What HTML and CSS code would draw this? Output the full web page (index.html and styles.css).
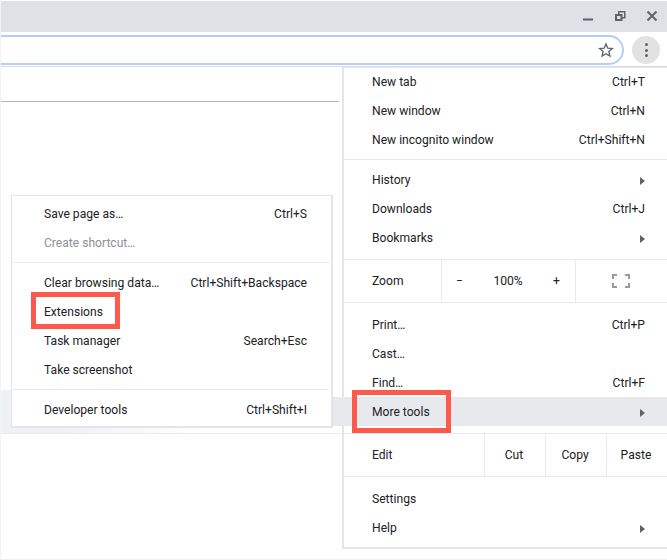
FILE: index.html
```html
<!DOCTYPE html>
<html lang="en">
<head>
<meta charset="utf-8">
<title>Chrome menu</title>
<link rel="stylesheet" href="styles.css">
</head>
<body>
<header class="titlebar">
  <svg class="win" width="16" height="16" viewBox="0 0 16 16"><rect x="3" y="10.500" width="10" height="2" fill="#5f6368"/></svg>
  <svg class="win" width="16" height="16" viewBox="0 0 16 16"><path d="M6 3h7.500v7.500h-3V9h1.500V4.500H7.500V6H6z M3 6h7.500v7H3z M5 8v3h3.500V8z" fill="#5f6368" fill-rule="evenodd"/></svg>
  <svg class="win" width="16" height="16" viewBox="0 0 16 16"><path d="M3.500 3.500l9 9M12.500 3.500l-9 9" stroke="#5f6368" stroke-width="2" fill="none"/></svg>
</header>
<div class="toolbar">
  <div class="omnibox">
    <svg width="16" height="16" viewBox="0 0 24 24"><path d="M12 3l2.700 6.300 6.800.6-5.200 4.500 1.600 6.700L12 17.500l-5.900 3.600 1.600-6.700L2.500 9.900l6.800-.6z" fill="none" stroke="#5f6368" stroke-width="2"/></svg>
  </div>
  <div class="kebab"><i></i><i></i><i></i></div>
</div>
<div class="page-line"></div>
<div class="page-band"></div>

<nav class="menu main">
  <section class="s1">
    <div class="item"><span>New tab</span><span>Ctrl+T</span></div>
    <div class="item"><span>New window</span><span>Ctrl+N</span></div>
    <div class="item"><span>New incognito window</span><span>Ctrl+Shift+N</span></div>
  </section>
  <section class="s2">
    <div class="item"><span>History</span><b class="arrow"></b></div>
    <div class="item"><span>Downloads</span><span>Ctrl+J</span></div>
    <div class="item"><span>Bookmarks</span><b class="arrow"></b></div>
  </section>
  <div class="split">
    <span class="split-label">Zoom</span>
    <div class="zoom-ctl"><span>−</span><span>100%</span><span>+</span></div>
    <div class="full">
      <svg width="18" height="14" viewBox="0 0 18 14"><path d="M1 5V1h4M13 1h4v4M17 9v4h-4M5 13H1V9" fill="none" stroke="#9a9a9a" stroke-width="2"/></svg>
    </div>
  </div>
  <section class="s3">
    <div class="item"><span>Print…</span><span>Ctrl+P</span></div>
    <div class="item"><span>Cast…</span></div>
    <div class="item"><span>Find…</span><span>Ctrl+F</span></div>
    <div class="item active"><span>More tools</span><b class="arrow"></b></div>
  </section>
  <div class="split edit">
    <span class="split-label">Edit</span>
    <span class="cell">Cut</span><span class="cell">Copy</span><span class="cell">Paste</span>
  </div>
  <section class="s4">
    <div class="item"><span>Settings</span></div>
    <div class="item"><span>Help</span><b class="arrow"></b></div>
  </section>
</nav>

<nav class="menu sub">
  <section class="t1">
    <div class="item"><span>Save page as…</span><span>Ctrl+S</span></div>
    <div class="item muted"><span>Create shortcut…</span></div>
  </section>
  <section class="t2">
    <div class="item"><span>Clear browsing data…</span><span>Ctrl+Shift+Backspace</span></div>
    <div class="item"><span>Extensions</span></div>
    <div class="item"><span>Task manager</span><span>Search+Esc</span></div>
    <div class="item"><span>Take screenshot</span></div>
  </section>
  <section class="t3">
    <div class="item"><span>Developer tools</span><span>Ctrl+Shift+I</span></div>
  </section>
</nav>

<div class="mark mark-more"></div>
<div class="mark mark-ext"></div>
</body>
</html>
```
FILE: styles.css
```css
* { box-sizing: border-box; }
html, body { margin: 0; height: 100%; }
body {
  width: 667px; height: 560px; overflow: hidden; position: relative;
  background: #fff; color: #202124;
  font: 12.1px/29px Roboto, "Liberation Sans", sans-serif;
  border-left: 1px solid #f0f3f8;
  border-bottom: 1px solid #eef0f3;
}
.titlebar {
  height: 31px; margin-top: 1px; background: #dee1e6;
  display: flex; justify-content: flex-end; align-items: center; gap: 16px; padding: 0 7px 1px 0;
}
.toolbar {
  height: 35px; display: flex; align-items: flex-start; padding-top: 3px; border-bottom: 1px solid #dadce0;
}
.omnibox {
  width: 623px; height: 30px;
  border: 2px solid #b3cefb; border-left: 0; border-radius: 0 15px 15px 0;
  display: flex; align-items: center; justify-content: flex-end; padding-right: 8px;
}
.kebab {
  width: 28px; height: 28px; margin: 1px 0 0 8px; border-radius: 50%; background: #e2e2e2;
  display: flex; flex-direction: column; align-items: center; justify-content: center; gap: 2.500px;
}
.kebab i { width: 3px; height: 3px; border-radius: 50%; background: #5f6368; }
.page-line { height: 1px; width: 338px; margin-top: 34px; background: #b5b5b5; }
.page-band {
  height: 44px; width: 341px; margin-top: 288px;
  background:
    linear-gradient(#e8e9ec, #e8e9ec) 322px 7px / 19px 29px no-repeat,
    linear-gradient(90deg, #eff1f3, #eff1f3 60px, #fff 200px);
  border-bottom: 1px solid #e8eaed;
}
.menu { position: absolute; background: #fff; }
.menu section, .split { border-bottom: 1px solid #e8eaed; }
.menu section:last-child { border-bottom: 0; }
.item { height: 29px; display: flex; justify-content: space-between; align-items: center; white-space: nowrap; }
.main { left: 341px; top: 67px; width: 325px; height: 482px; border: 2px solid #e4e5e8; border-right: 0; border-top-width: 1px; }
.main section, .main .split { margin-left: -2px; padding-left: 2px; }
.main .item { padding: 0 22px 0 28px; }
.s1 { padding-bottom: 4px; }
.s2 { padding: 6px 0 6px; }
.s3 { padding: 7px 0 7px; }
.main .s3 .item { padding-top: 2px; }
.s4 { padding: 8px 0 5px; }
.arrow { width: 0; height: 0; border-left: 5px solid #5f6368; border-top: 4px solid transparent; border-bottom: 4px solid transparent; }
.main .s3 .item.active { background: #e8e9ec; margin-left: -3px; padding-left: 31px; }
.muted { color: #8f9194; }
.split { height: 43px; display: flex; align-items: center; }
.split-label { width: 97px; padding-left: 28px; }
.zoom-ctl { width: 135px; height: 100%; display: flex; align-items: center; justify-content: space-between; padding: 0 15px 0 14px; border-left: 1px solid #e8eaed; border-right: 1px solid #e8eaed; }
.full { flex: 1; display: flex; justify-content: center; padding-right: 1px; }
.edit .split-label { width: 140px; }
.cell { width: 61px; height: 100%; display: flex; align-items: center; justify-content: center; padding-right: 2px; border-left: 1px solid #e8eaed; }
.sub { left: 10px; top: 195px; width: 322px; height: 233px; border: 2px solid #e4e5e8; border-width: 1px 2px 2px 1px; }
.sub section { margin-right: 2px; }
.sub .item { padding: 0 22px 0 32px; }
.t1 { padding: 4px 0; }
.t2 { padding: 6px 0 4px; }
.t3 { padding: 6px 0 2px; }
.mark { position: absolute; border: 5px solid #fd5a4b; }
.mark-more { left: 351px; top: 390px; width: 99px; height: 43px; }
.mark-ext { left: 30px; top: 292px; width: 89px; height: 37px; }
```
